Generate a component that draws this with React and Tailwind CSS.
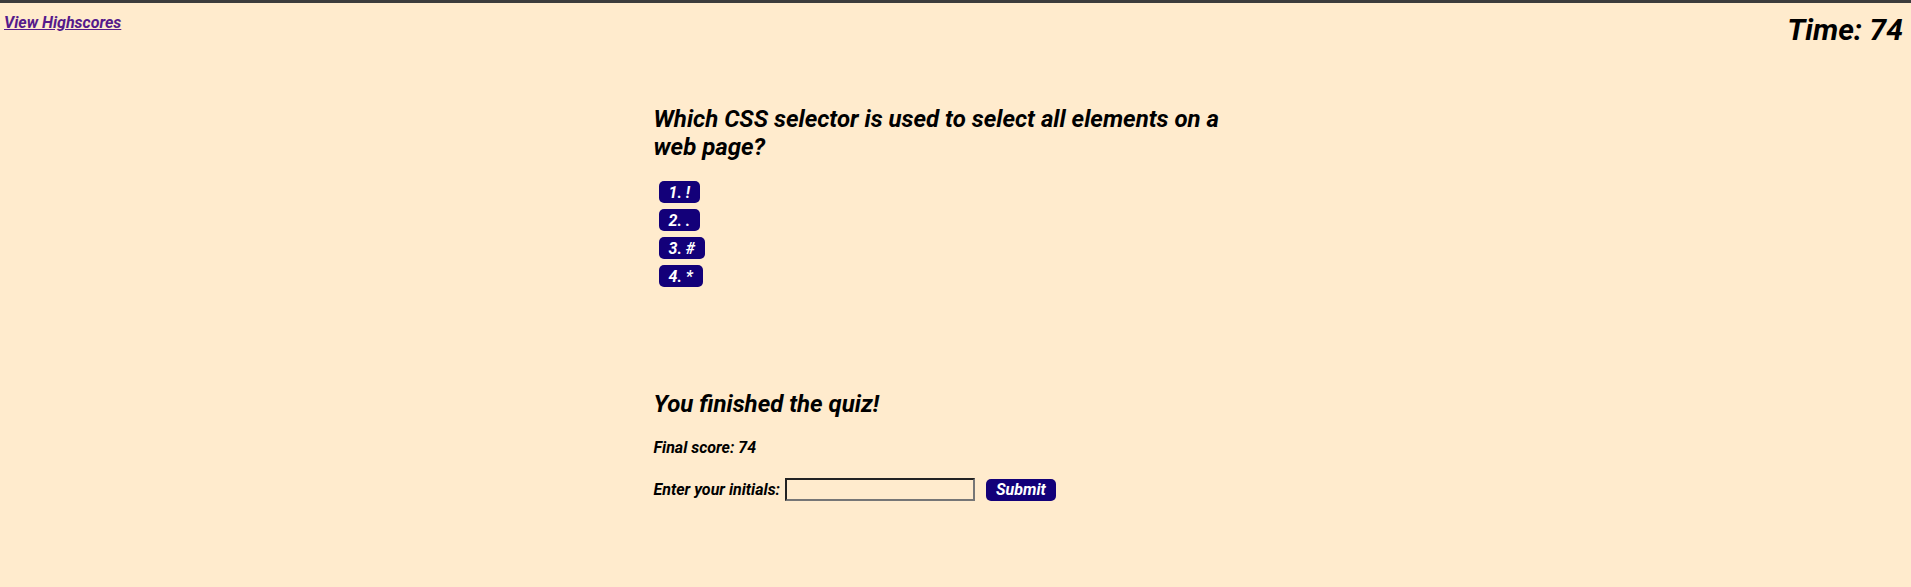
import React, { useState } from "react";

const choices = ["1. !", "2. .", "3. #", "4. *"];

const App = () => {
  const [initials, setInitials] = useState("");

  return (
    <div className="min-h-[587px] bg-[#ffebcd] border-t-[3px] border-[#3c3c3c] italic font-bold text-black font-['Roboto','Liberation_Sans',sans-serif]">
      <header className="flex justify-between items-start pt-[9px] pl-[4px] pr-[8px]">
        <a href="#" className="text-[16px] leading-[19px] text-[#551a8b] underline mt-[1px]">
          View Highscores
        </a>
        <div className="text-[30px] leading-[36px]">Time: 74</div>
      </header>

      <main className="w-[604px] mx-auto">
        <section className="mt-[57px]">
          <h2 className="w-[600px] text-[24px] leading-[28px]">
            Which CSS selector is used to select all elements on a web page?
          </h2>
          <div className="mt-[20px] ml-[5px] flex flex-col items-start gap-[6px]">
            {choices.map((c) => (
              <button
                key={c}
                className="bg-[#130079] text-white text-[16px] leading-[19px] px-[10px] py-[1.5px] rounded-[5px] italic font-bold"
              >
                {c}
              </button>
            ))}
          </div>
        </section>

        <section className="mt-[103px]">
          <h2 className="text-[24px] leading-[28px]">You finished the quiz!</h2>
          <p className="mt-[20px] text-[16px] leading-[19px]">Final score: 74</p>
          <div className="mt-[21px] flex items-center text-[16px] leading-[19px]">
            <label htmlFor="initials">Enter your initials:</label>
            <input
              id="initials"
              value={initials}
              onChange={(e) => setInitials(e.target.value)}
              className="ml-[5px] w-[190px] h-[23px] bg-transparent border-2 border-t-[#222] border-l-[#222] border-b-[#767676] border-r-[#767676] outline-none px-[2px]"
            />
            <button className="ml-[11px] bg-[#130079] text-white text-[16px] leading-[19px] px-[10px] py-[1.5px] rounded-[5px] italic font-bold">
              Submit
            </button>
          </div>
        </section>
      </main>
    </div>
  );
};

export default App;
